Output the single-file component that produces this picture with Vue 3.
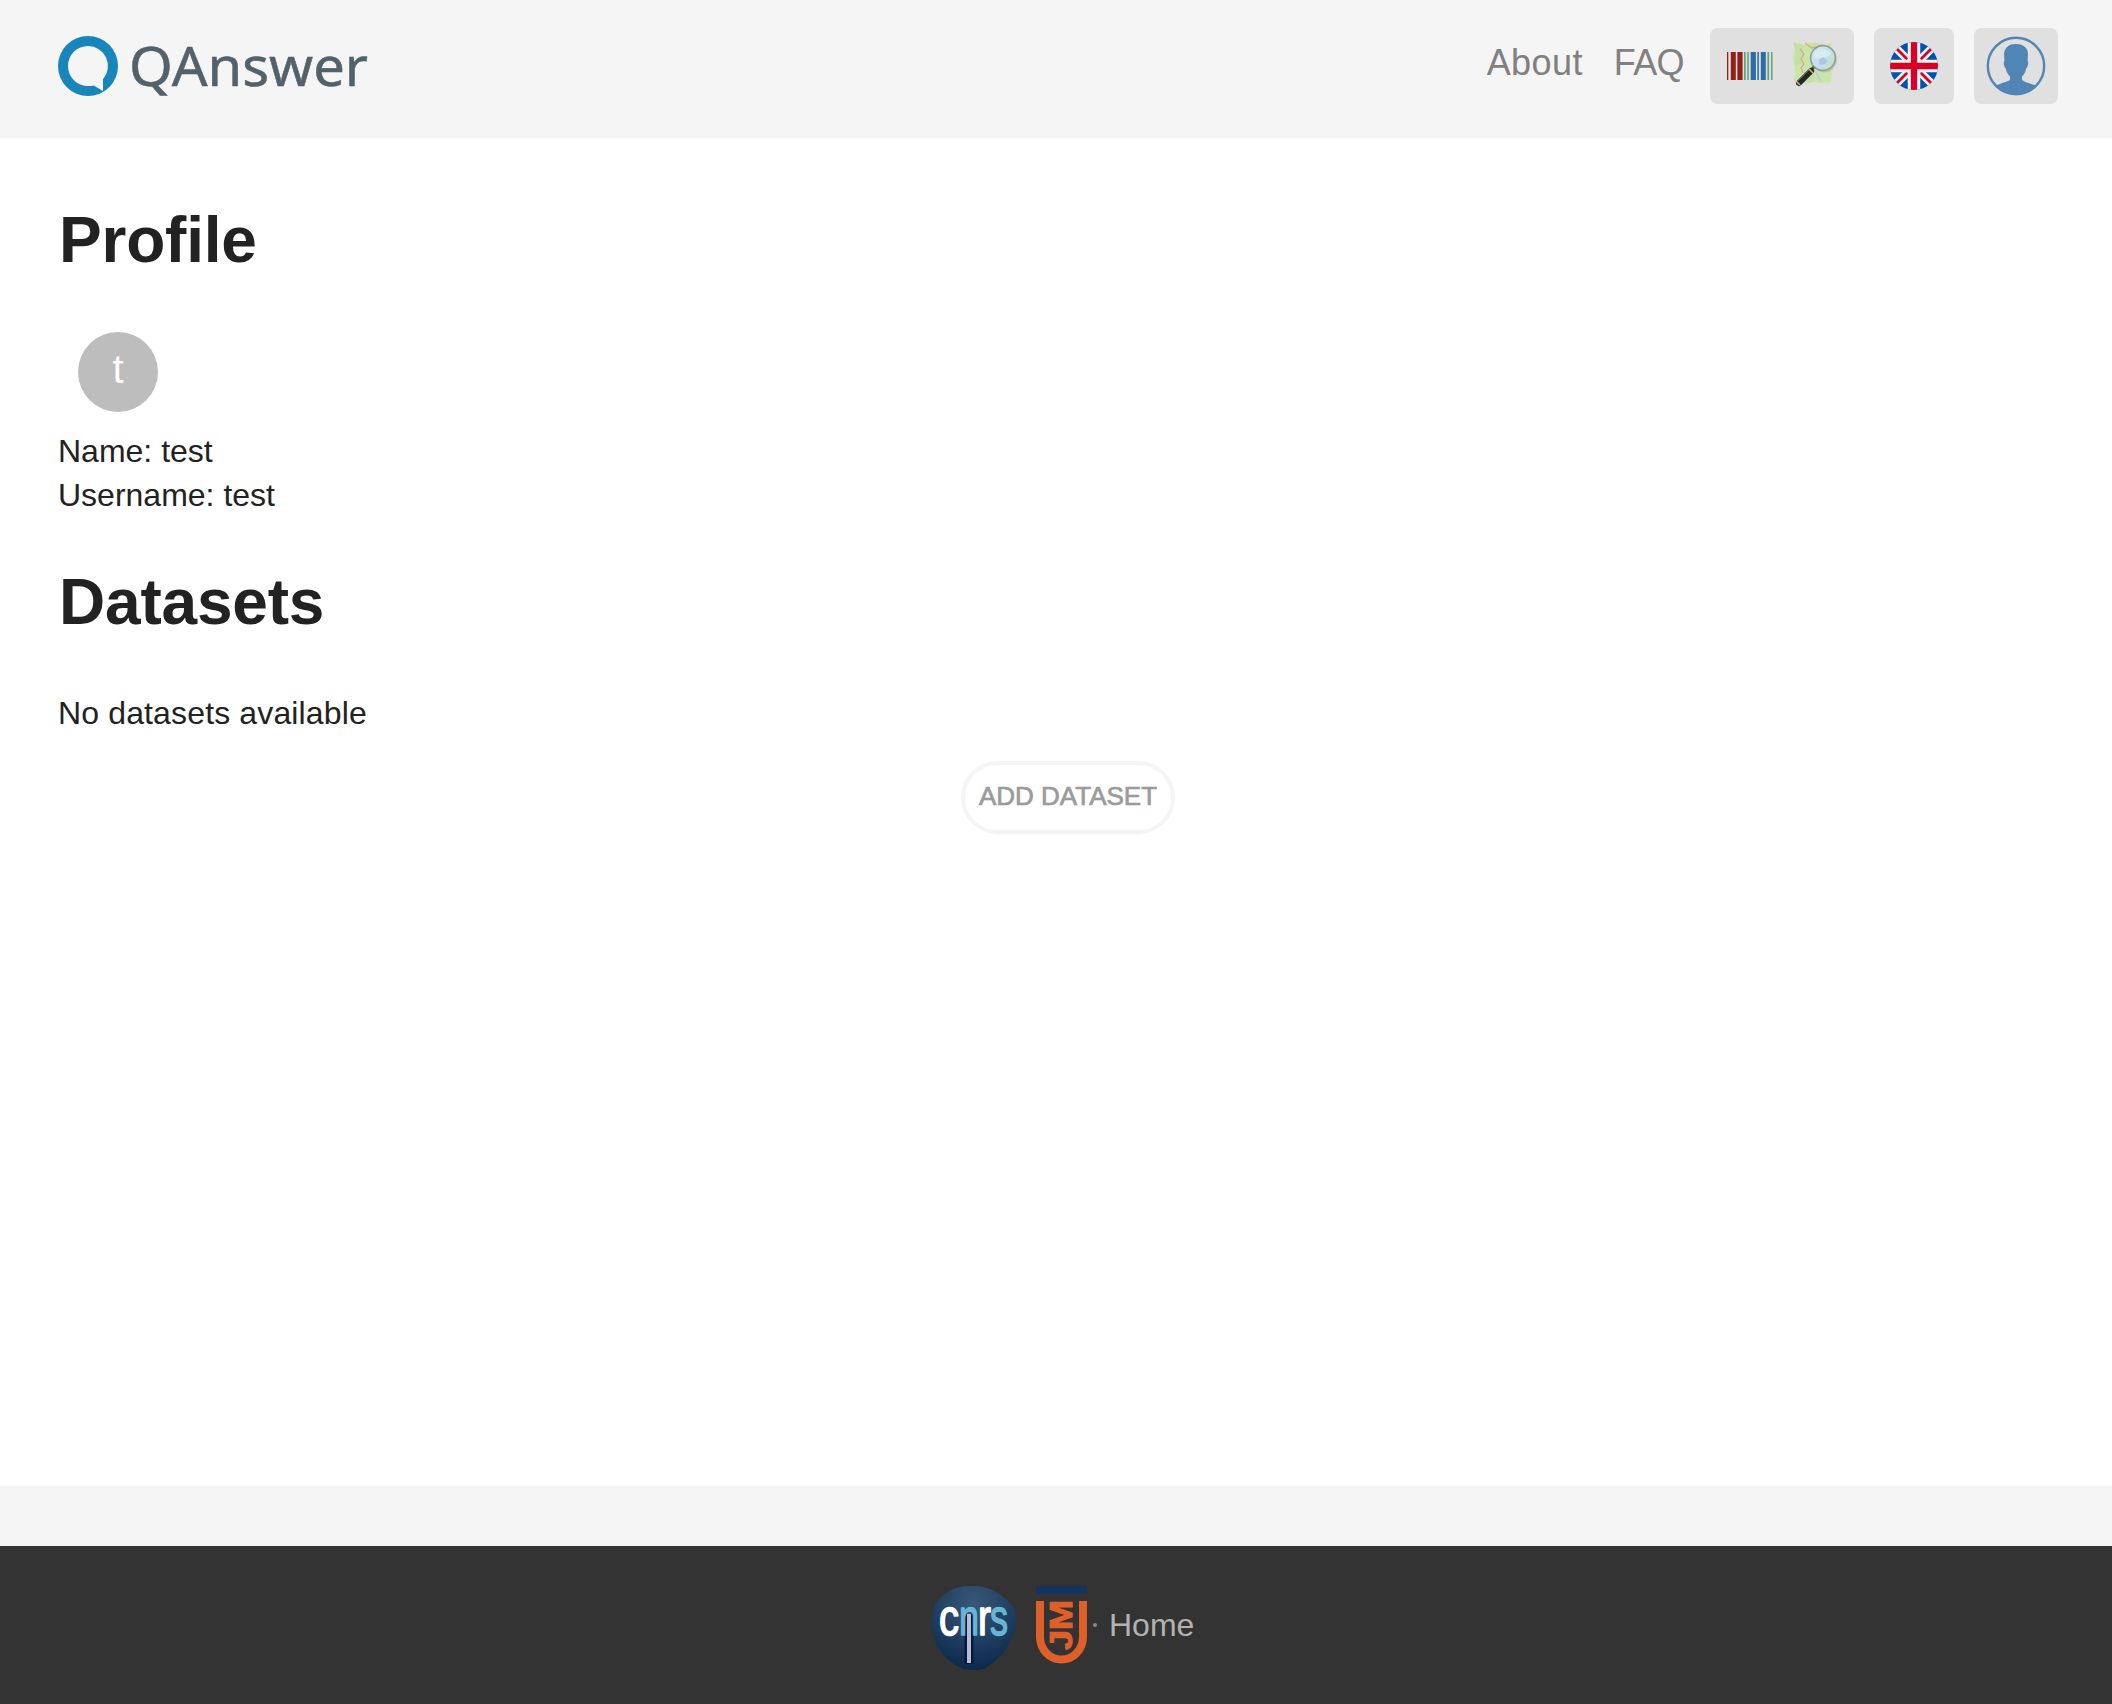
<script setup>
const details = [
  { label: 'Name', value: 'test' },
  { label: 'Username', value: 'test' },
]
const bars = [
  [0, 1.3, '#9b1c17'], [3.8, 5, '#931d17'], [10.4, 5.2, '#931d17'],
  [17, 1.7, '#5fa47c'], [20.3, 1.5, '#5fa47c'], [23.7, 5.2, '#2d6da3'],
  [30.3, 1.6, '#2d75ad'], [33.8, 5, '#2d6da3'], [40.4, 1.7, '#5fa47c'],
  [44, 1.5, '#5fa47c'],
]
const letters = [
  { char: 'c', x: 7, width: 20, tone: 'white' },
  { char: 'n', x: 27, width: 20, tone: 'blue' },
  { char: 'r', x: 46, width: 13, tone: 'white' },
  { char: 's', x: 58, width: 18, tone: 'blue' },
]
</script>

<template>
  <div class="page">
    <header class="header">
      <svg class="logo" width="320" height="76" viewBox="0 -8 320 76">
        <path fill="#1786ba" fill-rule="evenodd" d="M30 0a30 30 0 1 0 0 60 30 30 0 0 0 0-60Z M30 10a20 20 0 0 1 15 33.2V55l-9.300-5.500C32 50.300 31 50 30 50a20 20 0 0 1 0-40Z" />
        <text class="brand" x="71" y="49.500" textLength="239" lengthAdjust="spacingAndGlyphs">QAnswer</text>
      </svg>
      <nav class="nav">
        <a class="link about">About</a>
        <a class="link faq">FAQ</a>
        <button class="tile sources">
          <svg width="46" height="28" viewBox="0 0 46 28">
            <rect v-for="b in bars" :key="b[0]" :x="b[0]" y="0" :width="b[1]" height="28" :fill="b[2]" />
          </svg>
          <svg class="map" width="46" height="48" viewBox="0 0 46 48">
            <defs>
              <linearGradient id="lens" x1="0" y1="0" x2="1" y2="1">
                <stop offset="0" stop-color="#d3e7ed" /><stop offset=".55" stop-color="#c6dded" /><stop offset="1" stop-color="#c3e3b5" />
              </linearGradient>
            </defs>
            <path d="M1 1l10 3 10-3 10 3 9-2-1 12 2 11-2 16-9 1-10-1-9 2-9-3 1-11-2-12 2-9Z" fill="#cae5a9" />
            <path d="M1 1l10 3v18l-8 3 1-12ZM21 1l10 3v17l-10 3ZM12 30l10-4v15l-10 2Z" fill="#b8dc95" opacity=".4" />
            <path d="M8 8l4 5-3 5 3 5-3 4 2 5M13 2l7 5 11-3" fill="none" stroke="#dca98f" stroke-width="1.300" />
            <path d="M20 25l9 15" stroke="#b8cfe0" stroke-width="1.800" />
            <ellipse cx="32" cy="18" rx="13" ry="13.500" fill="#8b9682" opacity=".35" />
            <circle cx="31" cy="17" r="12.400" fill="url(#lens)" stroke="#8f9f9c" stroke-width="1.600" />
            <path d="M22 12q8-8 17 0l-4 4-12 2Z" fill="#dbeff0" opacity=".8" />
            <path d="M27 19l4-3 5 4-3 3-6 1Z" fill="#a9c8e6" />
            <path d="M22 26l-3 3" stroke="#555" stroke-width="3" />
            <path d="M19 30L7 42" stroke="#252429" stroke-width="6" stroke-linecap="round" />
            <path d="M17 29L6 40" stroke="#69666d" stroke-width="1" />
            <path d="M17 28l4 4M4 40l4 4" stroke="#dfb762" stroke-width="1.600" />
          </svg>
        </button>
        <button class="tile language">
          <svg width="48" height="48" viewBox="0 0 48 48">
            <defs><clipPath id="round"><circle cx="24" cy="24" r="24" /></clipPath></defs>
            <g clip-path="url(#round)">
              <rect width="48" height="48" fill="#0052b4" />
              <path d="M0 0l48 48M48 0L0 48" stroke="#f2f2f2" stroke-width="8" />
              <path d="M7 7l10.500 10.500M41 7L30.500 17.500M7 41l10.500-10.500M41 41L30.500 30.500" stroke="#d80027" stroke-width="2.800" />
              <path d="M24 0v48M0 24h48" stroke="#f2f2f2" stroke-width="12.500" />
              <path d="M24 0v48M0 24h48" stroke="#d80027" stroke-width="6.300" />
            </g>
          </svg>
        </button>
        <button class="tile account">
          <svg width="60" height="60" viewBox="0 0 60 60">
            <circle cx="30" cy="30" r="28.200" fill="none" stroke="#5185b6" stroke-width="2.400" />
            <path fill="#5185b6" d="M30 8c8 0 12 4 12 11l-.4 6c1.400 1 .4 6-1.400 7.500-.8 4-2.200 6-4.200 8v3c1 2 5 3 14 6A29 29 0 0 1 10 49.500c9-4 13-4 14-6v-3c-2-2-3.400-4-4.200-8C18 30.500 17 26 18.400 25L18 18c.8-7 5-10 12-10Z" />
          </svg>
        </button>
      </nav>
    </header>

    <main class="content">
      <h1>Profile</h1>
      <div class="avatar">t</div>
      <p v-for="item in details" :key="item.label">{{ item.label }}: {{ item.value }}</p>
      <h1 class="second">Datasets</h1>
      <p class="empty">No datasets available</p>
      <button class="add">ADD DATASET</button>
    </main>

    <div class="band"></div>
    <footer class="footer">
      <svg class="cnrs" width="84" height="84" viewBox="0 0 84 84">
        <defs>
          <radialGradient id="globe" cx=".5" cy=".2" r=".8">
            <stop offset="0" stop-color="#385878" /><stop offset=".55" stop-color="#203f62" /><stop offset="1" stop-color="#0b294b" />
          </radialGradient>
        </defs>
        <path d="M32 0h14c12 1 27 10 34 19 6 9 5 21 1 30-5 14-15 26-29 34-6 1.300-15 1.300-20 0C18 78 6 66 2 52-1 40-2 28 3 19 8 10 19 2 32 0Z" fill="url(#globe)" />
        <path d="M37 28v50" stroke="#081846" stroke-width="9" />
        <text v-for="l in letters" :key="l.char" class="cnrs-text" :class="l.tone" :x="l.x" y="48.500" :textLength="l.width" lengthAdjust="spacingAndGlyphs">{{ l.char }}</text>
        <path d="M37 28v49" stroke="#b7bdca" stroke-width="4" />
      </svg>
      <svg class="ujm" width="52" height="80" viewBox="0 0 52 80">
        <path d="M0 0h51v8H0Z" fill="#14335f" />
        <path d="M4 15v36a21.500 22.500 0 0 0 43 0V15" fill="none" stroke="#df5f28" stroke-width="8" />
        <text class="ujm-text" transform="translate(36 64) rotate(-90)" textLength="50" lengthAdjust="spacingAndGlyphs">JM</text>
      </svg>
      <span class="dot"></span>
      <a class="home">Home</a>
    </footer>
  </div>
</template>

<style>
body { margin: 0; background: #fff; }
</style>

<style scoped>
.page {
  display: flex;
  flex-direction: column;
  height: 1704px;
  font-family: "Liberation Sans", Arial, sans-serif;
  font-size: 32px;
  color: #222;
}
.page * { box-sizing: border-box; }
svg { display: block; flex: none; overflow: visible; }
button { font-family: inherit; margin: 0; padding: 0; }
.header {
  display: flex;
  justify-content: space-between;
  align-items: flex-start;
  height: 138px;
  padding: 28px 54px 0 58px;
  background: #f5f5f5;
  flex: none;
}
.brand { font: 54px "Noto Sans", "Open Sans", sans-serif; fill: #52616a; stroke: #52616a; stroke-width: 0.5px; }
.nav { display: flex; align-items: flex-start; }
.link { font-size: 36px; line-height: 44px; color: #808080; margin-top: 13px; white-space: nowrap; }
.about { margin-right: 31px; letter-spacing: 0.4px; }
.faq { margin-right: 26px; letter-spacing: -0.6px; }
.tile {
  display: flex;
  align-items: center;
  justify-content: center;
  height: 76px;
  border: 0;
  border-radius: 8px;
  background: #e0e0e0;
}
.sources { width: 144px; gap: 19px; margin-right: 20px; }
.map { margin-top: -2px; }
.language { width: 80px; margin-right: 20px; }
.account { width: 84px; }
.content { display: flex; flex-direction: column; flex: 1; padding: 64px 58px 0; }
h1 { font-size: 64px; line-height: 76px; font-weight: 700; margin: 0; padding-left: 1px; letter-spacing: -0.2px; }
.second { margin-top: 47px; margin-bottom: 51px; }
p { margin: 0; line-height: 44px; }
.empty { letter-spacing: 0.14px; }
.avatar {
  width: 80px;
  height: 80px;
  margin: 54px 0 17px 20px;
  border-radius: 50%;
  background: #bdbdbd;
  color: #fff;
  font-size: 40px;
  line-height: 74px;
  text-align: center;
}
.add {
  align-self: center;
  width: 214px;
  height: 73px;
  margin: 26px 0 0 24px;
  padding-bottom: 3px;
  border: 4px solid #f5f5f5;
  border-radius: 37px;
  background: #fff;
  color: #9b9b9b;
  font-size: 26px;
  white-space: nowrap;
  -webkit-text-stroke: 0.7px #9b9b9b;
}
.band { height: 60px; background: #f5f5f5; flex: none; }
.footer {
  display: flex;
  align-items: flex-start;
  height: 158px;
  padding: 40px 0 0 932px;
  background: #333;
  flex: none;
}
.cnrs { margin-right: 20px; }
.cnrs-text {
  font: 52px "Liberation Sans", Arial, sans-serif;
  stroke-width: 1.6px;
  stroke-linejoin: round;
}
.white { fill: #fff; stroke: #fff; }
.blue { fill: #66b5d5; stroke: #66b5d5; }
.ujm-text { font: bold 31px "Liberation Sans", Arial, sans-serif; fill: #df5f28; stroke: #df5f28; stroke-width: 1px; }
.dot { width: 4px; height: 4px; margin: 37px 14px 0 5px; border-radius: 50%; background: #888; }
.home { line-height: 44px; margin-top: 17px; margin-left: -2px; color: #b2b2b2; }
</style>
